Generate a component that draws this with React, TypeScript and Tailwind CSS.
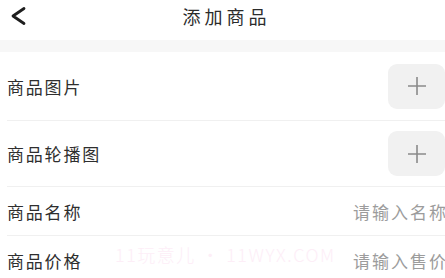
import React from 'react'

const FONT = { fontFamily: '"Noto Sans CJK SC", "Noto Sans", sans-serif' }

function AddBox() {
  return (
    <div className="w-[57px] h-[45px] rounded-[9px] bg-[#f1f1f1] flex items-center justify-center">
      <svg width="20" height="20" viewBox="0 0 20 20">
        <path d="M10 1v18M1 10h18" stroke="#8a8a8a" strokeWidth="1.6" fill="none" />
      </svg>
    </div>
  )
}

function Row({ label, height, children, divider = true }: { label: string; height: string; children?: React.ReactNode; divider?: boolean }) {
  return (
    <div className={divider ? 'ml-[7px] border-b border-[#f0f0f0]' : 'ml-[7px]'}>
      <div className={`flex items-center justify-between ${height}`}>
        <span className="text-[17px] tracking-[1.8px] text-[#2e2e2e] leading-none">{label}</span>
        {children}
      </div>
    </div>
  )
}

export default function App() {
  return (
    <div className="w-[445px] h-[278px] bg-white overflow-hidden relative" style={FONT}>
      <div className="h-[40px] relative flex items-center justify-center">
        <svg className="absolute left-[10px] top-[6px]" width="18" height="20" viewBox="0 0 18 20">
          <path d="M14 2.5L3 10l11 7.5" stroke="#1e1e1e" strokeWidth="2.8" fill="none" strokeLinecap="round" strokeLinejoin="round" />
        </svg>
        <span className="text-[18px] tracking-[4px] text-[#2b2b2b] leading-none ml-[8px] mb-[8px]">添加商品</span>
      </div>
      <div className="h-[12px] bg-[#f7f7f7]" />
      <Row label="商品图片" height="h-[68px]">
        <AddBox />
      </Row>
      <Row label="商品轮播图" height="h-[65px]">
        <AddBox />
      </Row>
      <Row label="商品名称" height="h-[48px]">
        <span className="text-[17px] tracking-[2px] text-[#9c9c9c] leading-none mr-[-3px] whitespace-nowrap">请输入名称</span>
      </Row>
      <Row label="商品价格" height="h-[49px]" divider={false}>
        <span className="text-[17px] tracking-[2px] text-[#9c9c9c] leading-none mr-[-3px] whitespace-nowrap">请输入售价</span>
      </Row>
      <div className="absolute left-[115px] top-[245px] text-[18px] font-light tracking-[1.5px] text-[#fdeef7] leading-none whitespace-nowrap pointer-events-none">
        11玩意儿 • 11WYX.COM
      </div>
    </div>
  )
}
